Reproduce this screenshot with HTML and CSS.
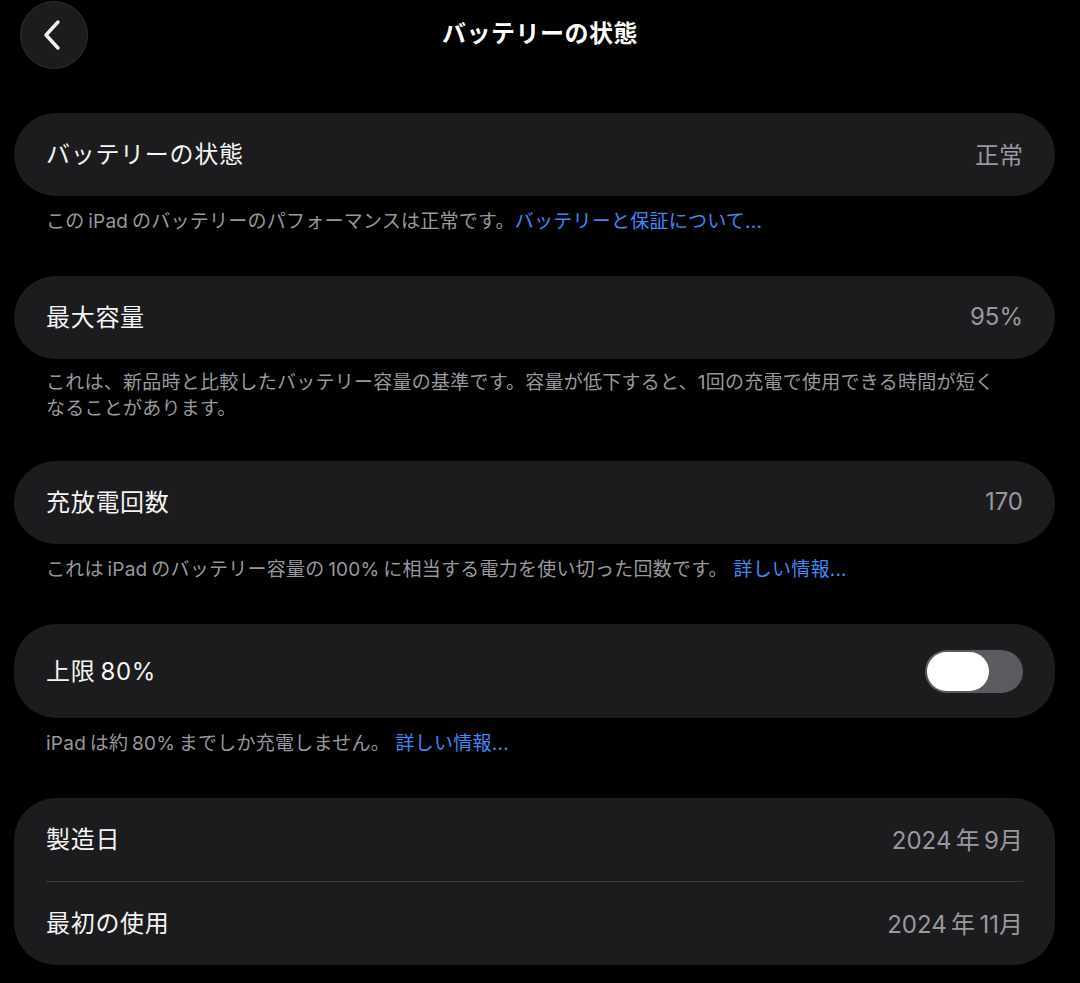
FILE: index.html
```html
<!DOCTYPE html>
<html lang="ja">
<head>
<meta charset="utf-8">
<link rel="stylesheet" href="styles.css">
</head>
<body>
<div class="page">
  <header class="nav">
    <div class="back">
      <svg width="26" height="34" viewBox="0 0 26 34"><path d="M19 4 L7 17 L19 30" fill="none" stroke="#f2f2f2" stroke-width="3.4" stroke-linecap="round" stroke-linejoin="round"/></svg>
    </div>
    <h1 class="title">バッテリーの状態</h1>
  </header>

  <section class="group">
    <div class="card"><div class="row"><span class="label">バッテリーの状態</span><span class="value">正常</span></div></div>
    <p class="note">この&thinsp;iPad&thinsp;のバッテリーのパフォーマンスは正常です。<span class="link">バッテリーと保証について...</span></p>
  </section>

  <section class="group">
    <div class="card"><div class="row"><span class="label">最大容量</span><span class="value">95%</span></div></div>
    <p class="note two">これは、新品時と比較したバッテリー容量の基準です。容量が低下すると、1回の充電で使用できる時間が短くなることがあります。</p>
  </section>

  <section class="group">
    <div class="card"><div class="row"><span class="label">充放電回数</span><span class="value">170</span></div></div>
    <p class="note">これは&thinsp;iPad&thinsp;のバッテリー容量の&thinsp;100%&thinsp;に相当する電力を使い切った回数です。 <span class="link">詳しい情報...</span></p>
  </section>

  <section class="group">
    <div class="card"><div class="row tall"><span class="label">上限&thinsp;80%</span><span class="toggle"><span class="knob"></span></span></div></div>
    <p class="note">iPad&thinsp;は約&thinsp;80%&thinsp;までしか充電しません。 <span class="link">詳しい情報...</span></p>
  </section>

  <section class="group">
    <div class="card">
      <div class="row"><span class="label">製造日</span><span class="value">2024&thinsp;年&thinsp;9月</span></div>
      <div class="sep"></div>
      <div class="row"><span class="label">最初の使用</span><span class="value">2024&thinsp;年&thinsp;11月</span></div>
    </div>
  </section>
</div>
</body>
</html>
```
FILE: styles.css
```css
html, body {
  margin: 0;
  padding: 0;
  background: #000;
}
body {
  width: 1080px;
  height: 983px;
  overflow: hidden;
  font-family: Inter, "Noto Sans CJK JP", sans-serif;
  color: #f4f4f4;
}
.page {
  padding: 0 25px 0 14px;
}
.nav {
  position: relative;
  height: 113px;
}
.back {
  position: absolute;
  left: 6px;
  top: 1px;
  width: 68px;
  height: 68px;
  border-radius: 50%;
  background: #1c1c1e;
  border: 1px solid #2e2e31;
  display: flex;
  align-items: center;
  justify-content: center;
  padding-right: 4px;
  box-sizing: border-box;
}
.title {
  margin: 0;
  position: absolute;
  left: 0;
  right: -11px;
  top: 17px;
  text-align: center;
  font-size: 24px;
  font-weight: 700;
  letter-spacing: 0.5px;
  line-height: 34px;
  color: #fff;
}
.card {
  background: #1c1c1e;
  border-radius: 42px;
  padding: 0 32px;
}
.row {
  height: 83px;
  display: flex;
  align-items: center;
  justify-content: space-between;
}
.row.tall {
  height: 94px;
}
.label {
  font-size: 24px;
  letter-spacing: 0.7px;
  color: #f4f4f4;
  padding-bottom: 4px;
}
.value {
  font-size: 24px;
  color: #98989e;
  padding-bottom: 2px;
}
.sep {
  height: 1px;
  background: #3a3a3d;
}
.note {
  margin: 13px 0 41px 32px;
  width: 962px;
  font-size: 19px;
  letter-spacing: 0.25px;
  line-height: 26px;
  color: #98989e;
}
.note.two {
  margin-top: 11px;
  margin-bottom: 39px;
}
.link {
  color: #3f8af5;
}
.toggle {
  width: 98px;
  height: 43px;
  border-radius: 22px;
  background: #5b5b5f;
  padding: 2px;
  box-sizing: border-box;
  display: flex;
  align-items: center;
}
.knob {
  width: 62px;
  height: 39px;
  border-radius: 20px;
  background: #fff;
}
```
